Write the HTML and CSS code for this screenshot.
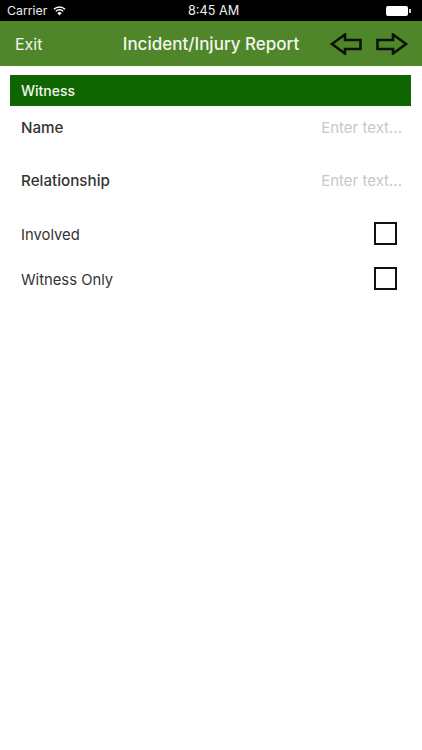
FILE: index.html
```html
<!DOCTYPE html>
<html lang="en">
<head>
  <meta charset="UTF-8" />
  <meta name="viewport" content="width=device-width, initial-scale=1.0"/>
  <title>Incident/Injury Report</title>
  <link rel="stylesheet" href="styles.css">
</head>
<body>
  <div class="statusbar">
    <div class="status-left">
      <span>Carrier</span>
      <svg class="wifi" width="13" height="10" viewBox="0 0 14 10">
        <path d="M7 9.8 L4.6 7.2 A3.4 3.4 0 0 1 9.4 7.2 Z" fill="#fff"/>
        <path d="M3 5.4 A5.6 5.6 0 0 1 11 5.4" fill="none" stroke="#fff" stroke-width="1.5"/>
        <path d="M1 3.2 A8.5 8.5 0 0 1 13 3.2" fill="none" stroke="#fff" stroke-width="1.5"/>
      </svg>
    </div>
    <span class="status-time">8:45 AM</span>
    <div class="battery"><div class="battery-body"></div><div class="battery-tip"></div></div>
  </div>

  <div class="navbar">
    <span class="exit">Exit</span>
    <h1>Incident/Injury Report</h1>
    <div class="arrows">
      <svg width="32" height="22" viewBox="0 0 32 22">
        <path d="M2 11 L15 1.5 V7 H30.5 V16 H15 V20.5 Z" fill="none" stroke="#0a1505" stroke-width="2.6"/>
      </svg>
      <svg width="32" height="22" viewBox="0 0 32 22">
        <path d="M30 11 L17 1.5 V7 H1.5 V16 H17 V20.5 Z" fill="none" stroke="#0a1505" stroke-width="2.6"/>
      </svg>
    </div>
  </div>

  <div class="content">
    <div class="section-head">Witness</div>

    <div class="field">
      <label>Name</label>
      <span class="placeholder">Enter text...</span>
    </div>
    <div class="field">
      <label>Relationship</label>
      <span class="placeholder">Enter text...</span>
    </div>

    <div class="check-row first">
      <span>Involved</span>
      <div class="checkbox"></div>
    </div>
    <div class="check-row">
      <span>Witness Only</span>
      <div class="checkbox"></div>
    </div>
  </div>
</body>
</html>
```

FILE: styles.css
```css
* {
  box-sizing: border-box;
  margin: 0;
  padding: 0;
  font-family: Inter, "Liberation Sans", sans-serif;
}

body {
  width: 422px;
  height: 750px;
  background-color: white;
  color: #333;
  overflow: hidden;
}

.statusbar {
  display: flex;
  align-items: center;
  justify-content: space-between;
  position: relative;
  height: 21px;
  padding: 0 11px 0 7px;
  background-color: black;
  color: #eee;
  font-size: 12.3px;
}

.status-left {
  display: flex;
  align-items: center;
  gap: 6px;
}

.status-time {
  position: absolute;
  left: 188px;
  font-size: 12.7px;
}

.battery {
  display: flex;
  align-items: center;
}

.battery-body {
  width: 22px;
  height: 10px;
  background-color: white;
  border-radius: 2px;
}

.battery-tip {
  width: 2px;
  height: 4px;
  margin-left: 1px;
  background-color: #ccc;
}

.navbar {
  display: flex;
  align-items: center;
  position: relative;
  height: 45px;
  padding: 0 14px 0 15px;
  background-color: #4f8629;
  color: #f2f6ee;
}

.exit {
  font-size: 16px;
}

.navbar h1 {
  position: absolute;
  left: 0;
  right: 0;
  text-align: center;
  font-size: 17px;
  font-weight: 500;
}

.arrows {
  display: flex;
  gap: 14px;
  margin-left: auto;
}

.content {
  padding: 9px 10px 0 10px;
}

.section-head {
  height: 31px;
  line-height: 31px;
  padding-left: 11px;
  margin-right: 1px;
  background-color: #0f6600;
  color: #f2f6ee;
  font-size: 14px;
  font-weight: 500;
}

.field {
  display: flex;
  align-items: center;
  justify-content: space-between;
  height: 43px;
  margin-bottom: 10px;
  padding: 0 10px 0 11px;
}

.field label {
  font-size: 15.2px;
  font-weight: 500;
}

.placeholder {
  color: #c7c7cd;
  font-size: 15px;
}

.check-row {
  display: flex;
  align-items: center;
  justify-content: space-between;
  height: 45px;
  padding: 0 15px 0 11px;
  font-size: 14.8px;
}

.check-row.first {
  margin-top: 4px;
}

.checkbox {
  width: 23px;
  height: 23px;
  margin-bottom: 2px;
  border: 2.5px solid #111;
}
```
